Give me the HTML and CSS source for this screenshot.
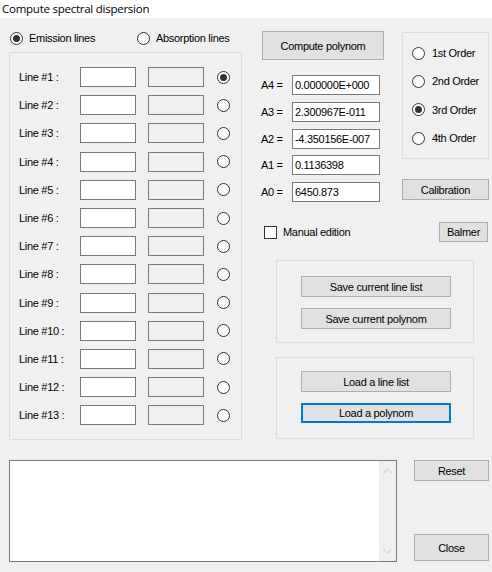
FILE: index.html
```html
<!DOCTYPE html>
<html>
<head>
<meta charset="utf-8">
<title>Compute spectral dispersion</title>
<link rel="stylesheet" href="styles.css">
</head>
<body>
<div class="titlebar">Compute spectral dispersion</div>
<div class="main">
  <div class="left">
    <div class="mode">
      <label class="opt opt-emission"><span class="radio checked"></span><span>Emission lines</span></label>
      <label class="opt"><span class="radio"></span><span>Absorption lines</span></label>
    </div>
    <div class="lines-box">
      <div class="line-row"><span class="line-label">Line #1 :</span><span class="field"></span><span class="field ro"></span><span class="radio checked"></span></div>
      <div class="line-row"><span class="line-label">Line #2 :</span><span class="field"></span><span class="field ro"></span><span class="radio"></span></div>
      <div class="line-row"><span class="line-label">Line #3 :</span><span class="field"></span><span class="field ro"></span><span class="radio"></span></div>
      <div class="line-row"><span class="line-label">Line #4 :</span><span class="field"></span><span class="field ro"></span><span class="radio"></span></div>
      <div class="line-row"><span class="line-label">Line #5 :</span><span class="field"></span><span class="field ro"></span><span class="radio"></span></div>
      <div class="line-row"><span class="line-label">Line #6 :</span><span class="field"></span><span class="field ro"></span><span class="radio"></span></div>
      <div class="line-row"><span class="line-label">Line #7 :</span><span class="field"></span><span class="field ro"></span><span class="radio"></span></div>
      <div class="line-row"><span class="line-label">Line #8 :</span><span class="field"></span><span class="field ro"></span><span class="radio"></span></div>
      <div class="line-row"><span class="line-label">Line #9 :</span><span class="field"></span><span class="field ro"></span><span class="radio"></span></div>
      <div class="line-row"><span class="line-label">Line #10 :</span><span class="field"></span><span class="field ro"></span><span class="radio"></span></div>
      <div class="line-row"><span class="line-label">Line #11 :</span><span class="field"></span><span class="field ro"></span><span class="radio"></span></div>
      <div class="line-row"><span class="line-label">Line #12 :</span><span class="field"></span><span class="field ro"></span><span class="radio"></span></div>
      <div class="line-row"><span class="line-label">Line #13 :</span><span class="field"></span><span class="field ro"></span><span class="radio"></span></div>
    </div>
  </div>
  <div class="right">
    <div class="upper">
      <div class="coef-col">
        <button class="btn btn-compute">Compute polynom</button>
        <div class="coefs">
          <div class="coef"><span class="coef-label">A4 =</span><span class="field coef-field">0.000000E+000</span></div>
          <div class="coef"><span class="coef-label">A3 =</span><span class="field coef-field">2.300967E-011</span></div>
          <div class="coef"><span class="coef-label">A2 =</span><span class="field coef-field">-4.350156E-007</span></div>
          <div class="coef"><span class="coef-label">A1 =</span><span class="field coef-field">0.1136398</span></div>
          <div class="coef"><span class="coef-label">A0 =</span><span class="field coef-field">6450.873</span></div>
        </div>
      </div>
      <div class="order-col">
        <div class="group order-box">
          <label class="opt order-opt"><span class="radio"></span><span>1st Order</span></label>
          <label class="opt order-opt"><span class="radio"></span><span>2nd Order</span></label>
          <label class="opt order-opt"><span class="radio checked"></span><span>3rd Order</span></label>
          <label class="opt order-opt"><span class="radio"></span><span>4th Order</span></label>
        </div>
        <button class="btn btn-calib">Calibration</button>
      </div>
    </div>
    <div class="manual-row">
      <label class="check-label"><span class="checkbox"></span><span>Manual edition</span></label>
      <button class="btn btn-balmer">Balmer</button>
    </div>
    <div class="group action-box save-box">
      <button class="btn btn-action">Save current line list</button>
      <button class="btn btn-action">Save current polynom</button>
    </div>
    <div class="group action-box load-box">
      <button class="btn btn-action">Load a line list</button>
      <button class="btn btn-action btn-focus">Load a polynom</button>
    </div>
  </div>
</div>
<div class="bottom">
  <div class="log">
    <div class="log-body"></div>
    <div class="scrollbar">
      <svg class="arrow" width="9" height="6" viewBox="0 0 9 6"><path d="M0.5 5 L4.5 1 L8.5 5" fill="none" stroke="#c4c4c4" stroke-width="1"/></svg>
      <svg class="arrow" width="9" height="6" viewBox="0 0 9 6"><path d="M0.5 1 L4.5 5 L8.5 1" fill="none" stroke="#c4c4c4" stroke-width="1"/></svg>
    </div>
  </div>
  <div class="bottom-buttons">
    <button class="btn btn-reset">Reset</button>
    <button class="btn btn-close">Close</button>
  </div>
</div>
</body>
</html>
```

FILE: styles.css
```css
* {
  box-sizing: border-box;
}

html,
body {
  margin: 0;
  padding: 0;
}

body {
  width: 492px;
  height: 572px;
  overflow: hidden;
  background: #f0f0f0;
  color: #000;
  font-family: "Liberation Sans", Arial, sans-serif;
  font-size: 11px;
  letter-spacing: -0.3px;
}

.titlebar {
  height: 18px;
  background: #fff;
  padding-left: 2px;
  font-family: "Open Sans", "Noto Sans", sans-serif;
  font-size: 11.5px;
  line-height: 17px;
  letter-spacing: -0.25px;
}

.main {
  display: flex;
  height: 442px;
}

/* left side */
.left {
  width: 242px;
  padding-left: 9px;
  display: flex;
  flex-direction: column;
}

.mode {
  height: 34px;
  padding-top: 6px;
  padding-left: 1px;
  display: flex;
  align-items: center;
}

.opt {
  display: flex;
  align-items: center;
  gap: 6px;
}

.opt-emission {
  width: 127px;
}

.radio {
  position: relative;
  display: inline-block;
  flex: none;
  width: 13px;
  height: 13px;
  border: 1px solid #333;
  border-radius: 50%;
  background: #fff;
}

.radio.checked::after {
  content: "";
  position: absolute;
  left: 2px;
  top: 2px;
  width: 7px;
  height: 7px;
  border-radius: 50%;
  background: #333;
}

.lines-box {
  height: 388px;
  border: 1px solid #dcdcdc;
  padding: 10px 0 0 9px;
}

.line-row {
  height: 28.2px;
  display: flex;
  align-items: center;
}

.line-label {
  width: 61px;
}

.field {
  display: block;
  flex: none;
  width: 56px;
  height: 20px;
  border: 1px solid #7a7a7a;
  background: #fff;
}

.field.ro {
  margin-left: 12px;
  background: #f0f0f0;
}

.line-row .radio {
  margin-left: 13px;
}

/* right side */
.right {
  width: 250px;
  padding-left: 19px;
  display: flex;
  flex-direction: column;
}

.upper {
  display: flex;
}

.btn {
  display: block;
  margin: 0;
  padding: 0;
  background: #e1e1e1;
  border: 1px solid #adadad;
  color: #000;
  font-family: "Liberation Sans", Arial, sans-serif;
  font-size: 11px;
  letter-spacing: -0.3px;
  text-align: center;
}

.coef-col {
  width: 123px;
  padding-top: 13px;
}

.btn-compute {
  margin-left: 1px;
  width: 122px;
  height: 29px;
}

.coefs {
  margin-top: 15px;
  display: flex;
  flex-direction: column;
  gap: 6.75px;
}

.coef {
  display: flex;
  align-items: center;
  height: 20px;
}

.coef-label {
  width: 31px;
}

.coef-field {
  width: 88px;
  padding-left: 2px;
  line-height: 18px;
}

.order-col {
  width: 87px;
  margin-left: 18px;
  padding-top: 14px;
}

.group {
  border: 1px solid #dcdcdc;
}

.order-box {
  height: 127px;
  padding: 6px 0 0 9px;
}

.order-opt {
  height: 28.3px;
  gap: 7px;
}

.btn-calib {
  margin-top: 20px;
  width: 87px;
  height: 21px;
}

.manual-row {
  margin-top: 20px;
  width: 227px;
  height: 20px;
  display: flex;
  align-items: center;
  justify-content: space-between;
}

.check-label {
  display: flex;
  align-items: center;
  gap: 6px;
  padding-left: 3px;
}

.checkbox {
  display: inline-block;
  width: 13px;
  height: 13px;
  border: 1px solid #333;
  background: #fff;
}

.btn-balmer {
  width: 49px;
  height: 20px;
}

.action-box {
  width: 198px;
  margin-left: 15px;
  padding-left: 24px;
  display: flex;
  flex-direction: column;
  gap: 11px;
}

.save-box {
  margin-top: 18px;
  height: 83px;
  padding-top: 15px;
}

.load-box {
  margin-top: 14px;
  height: 82px;
  padding-top: 13px;
}

.btn-action {
  width: 150px;
  height: 21px;
}

.btn-focus {
  height: 20px;
  border: 2px solid #0078d7;
}

/* bottom */
.bottom {
  display: flex;
  padding-left: 9px;
}

.log {
  width: 388px;
  height: 102px;
  border: 1px solid #7a7a7a;
  background: #fff;
  display: flex;
}

.log-body {
  flex: 1;
}

.scrollbar {
  width: 17px;
  background: #f0f0f0;
  display: flex;
  flex-direction: column;
  justify-content: space-between;
  align-items: center;
  padding: 7px 0 7px;
}

.arrow {
  display: block;
}

.bottom-buttons {
  width: 75px;
  height: 101px;
  margin-left: 17px;
  display: flex;
  flex-direction: column;
  justify-content: space-between;
}

.btn-reset {
  width: 75px;
  height: 21px;
}

.btn-close {
  width: 75px;
  height: 27px;
}
```
